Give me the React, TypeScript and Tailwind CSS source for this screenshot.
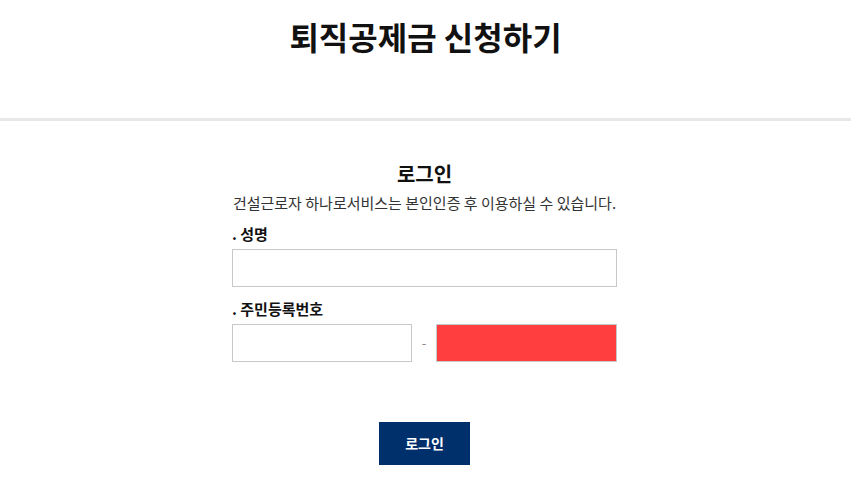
export default function App() {
  return (
    <div className="min-h-screen bg-white text-[#222]" style={{ fontFamily: '"Noto Sans CJK KR", "Noto Sans", sans-serif' }}>
      {/* Header */}
      <header className="h-[121px] border-b-[3px] border-[#e8e8e8] pt-[12px]">
        <h1 className="text-center text-[32px] font-bold leading-[48px] text-[#111]">퇴직공제금 신청하기</h1>
      </header>

      {/* Login form */}
      <main className="mx-auto w-[385px] -translate-x-[1px] pt-[39px]">
        <h2 className="text-center text-[20px] font-bold leading-[28px] text-[#111]">로그인</h2>
        <p className="mt-[5px] text-center text-[15px] leading-[20px] text-[#333]">
          건설근로자 하나로서비스는 본인인증 후 이용하실 수 있습니다.
        </p>

        <label className="mt-[11px] block text-[15px] font-bold leading-[20px] text-[#111]">. 성명</label>
        <input type="text" className="mt-[5px] block h-[38px] w-full border border-[#c8c8c8] bg-white px-2 outline-none" />

        <label className="mt-[12px] block text-[15px] font-bold leading-[20px] text-[#111]">. 주민등록번호</label>
        <div className="mt-[5px] flex items-center">
          <input type="text" className="block h-[38px] w-[180px] border border-[#c8c8c8] bg-white px-2 outline-none" />
          <span className="flex-1 text-center text-[13px] text-[#888]">-</span>
          <input type="password" className="block h-[38px] w-[181px] border border-[#c8c8c8] bg-[#ff3f3f] px-2 outline-none" />
        </div>

        <div className="mt-[60px] flex justify-center">
          <button className="h-[43px] w-[91px] bg-[#00306b] text-[14px] font-bold text-white">로그인</button>
        </div>
      </main>
    </div>
  );
}
